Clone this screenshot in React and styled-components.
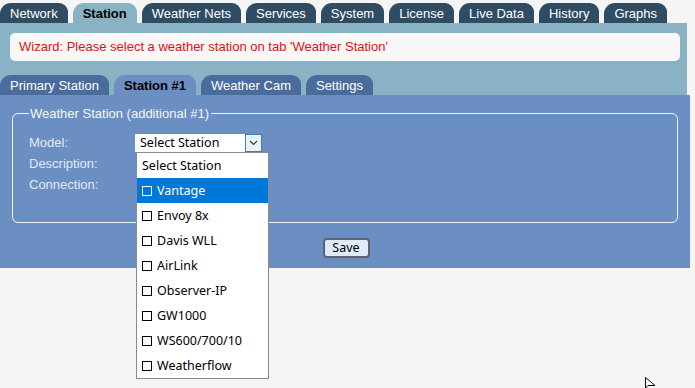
import React from "react";
import styled, { createGlobalStyle } from "styled-components";

const Global = createGlobalStyle`
  html, body { margin: 0; padding: 0; background: #f5f5f5; }
  body { font-family: "Liberation Sans", Arial, sans-serif; font-size: 13px; }
  #root { position: relative; min-height: 388px; overflow: hidden; }
`;

const Page = styled.div`
  width: 690px;
  display: flex;
  flex-direction: column;
`;

const TabRow = styled.div`
  display: flex;
  gap: 5px;
  padding-top: ${(p) => p.$top || 0}px;
`;

const Tab = styled.div`
  height: 20px;
  line-height: 21px;
  padding: 0 10px 0 10px;
  border-radius: 11px 9px 0 0;
  white-space: nowrap;
  font-size: 13px;
  background: ${(p) => (p.$active ? p.$activeBg : p.$bg)};
  color: ${(p) => (p.$active ? "#000" : "#fff")};
  font-weight: ${(p) => (p.$active ? "bold" : "normal")};
`;

const TopPanel = styled.div`
  background: #8ab2c5;
  padding: 10px 0 0 0;
  width: 687px;
  display: flex;
  flex-direction: column;
`;

const Message = styled.div`
  margin: 0 7px 0 10px;
  height: 28px;
  line-height: 28px;
  background: #f7f7f7;
  border-radius: 5px;
  color: #dd1414;
  padding-left: 9px;
  margin-bottom: 14px;
`;

const MainPanel = styled.div`
  background: #6b8fc2;
  height: 173px;
  padding-top: 11px;
  box-sizing: border-box;
  display: flex;
  flex-direction: column;
`;

const Fieldset = styled.fieldset`
  margin: 0 12px;
  border: 1px solid #f2f5fa;
  border-radius: 6px;
  padding: 11px 0 0 16px;
  height: 117px;
  box-sizing: border-box;
`;

const Legend = styled.legend`
  color: #f4f7fb;
  padding: 0 2px 0 1px;
  margin-left: 0;
  font-size: 13px;
  line-height: 15px;
`;

const FormGrid = styled.div`
  display: grid;
  grid-template-columns: 106px 1fr;
  grid-auto-rows: 21px;
  align-items: center;
`;

const Label = styled.div`
  color: #e4e9f2;
  font-size: 13px;
`;

const SelectWrap = styled.div`
  position: relative;
  width: 127px;
  height: 18px;
  background: #fff;
  display: flex;
  align-items: center;
  font-family: "Noto Sans", sans-serif;
  font-size: 12.5px;
  color: #000;
`;

const SelectText = styled.span`
  flex: 1;
  padding-left: 5px;
  line-height: 18px;
`;

const ArrowBox = styled.div`
  width: 15px;
  height: 16px;
  border: 1px solid #3d7fbd;
  background: #eaf3fb;
  display: flex;
  align-items: center;
  justify-content: center;
`;

const DropList = styled.div`
  position: absolute;
  left: 1px;
  top: 18px;
  width: 131px;
  background: #fff;
  border: 1px solid #8a8a8a;
  z-index: 5;
  display: flex;
  flex-direction: column;
`;

const Option = styled.div`
  height: 25px;
  line-height: 25px;
  padding-left: 5px;
  white-space: nowrap;
  font-family: "Noto Sans", sans-serif;
  font-size: 12.5px;
  background: ${(p) => (p.$sel ? "#0078d7" : "#fff")};
  color: ${(p) => (p.$sel ? "#fff" : "#000")};
`;

const Box = styled.span`
  display: inline-block;
  width: 8px;
  height: 8px;
  border: 1px solid ${(p) => (p.$sel ? "#fff" : "#000")};
  margin-right: 5px;
  vertical-align: -1px;
`;

const ButtonRow = styled.div`
  display: flex;
  justify-content: center;
  padding-top: 15px;
  padding-left: 2px;
`;

const SaveButton = styled.button`
  width: 47px;
  height: 20px;
  padding: 0;
  background: #dfeafa;
  border: 2px solid #5b6470;
  border-radius: 4px;
  font-family: "Noto Sans", sans-serif;
  font-size: 12.5px;
  color: #000;
  line-height: 14px;
`;

const Cursor = styled.svg`
  position: absolute;
  left: 645px;
  top: 377px;
`;

const topTabs = [
  "Network",
  "Station",
  "Weather Nets",
  "Services",
  "System",
  "License",
  "Live Data",
  "History",
  "Graphs",
];

const subTabs = ["Primary Station", "Station #1", "Weather Cam", "Settings"];

const options = [
  "Vantage",
  "Envoy 8x",
  "Davis WLL",
  "AirLink",
  "Observer-IP",
  "GW1000",
  "WS600/700/10",
  "Weatherflow",
];

export default function App() {
  return (
    <>
      <Global />
      <Page>
        <TabRow $top={3}>
          {topTabs.map((t) => (
            <Tab key={t} $bg="#2f4c63" $activeBg="#8ab2c5" $active={t === "Station"}>
              {t}
            </Tab>
          ))}
        </TabRow>
        <TopPanel>
          <Message>Wizard: Please select a weather station on tab 'Weather Station'</Message>
          <TabRow>
            {subTabs.map((t) => (
              <Tab key={t} $bg="#4a6c9c" $activeBg="#6b8fc2" $active={t === "Station #1"}>
                {t}
              </Tab>
            ))}
          </TabRow>
        </TopPanel>
        <MainPanel>
          <Fieldset>
            <Legend>Weather Station (additional #1)</Legend>
            <FormGrid>
              <Label>Model:</Label>
              <SelectWrap>
                <SelectText>Select Station</SelectText>
                <ArrowBox>
                  <svg width="9" height="6" viewBox="0 0 9 6">
                    <path d="M1 1 L4.5 4.5 L8 1" fill="none" stroke="#333" strokeWidth="1.1" />
                  </svg>
                </ArrowBox>
                <DropList>
                  <Option>Select Station</Option>
                  {options.map((o, i) => (
                    <Option key={o} $sel={i === 0}>
                      <Box $sel={i === 0} />
                      {o}
                    </Option>
                  ))}
                </DropList>
              </SelectWrap>
              <Label>Description:</Label>
              <div />
              <Label>Connection:</Label>
              <div />
            </FormGrid>
          </Fieldset>
          <ButtonRow>
            <SaveButton>Save</SaveButton>
          </ButtonRow>
        </MainPanel>
      </Page>
      <Cursor width="12" height="12" viewBox="0 0 12 12">
        <path d="M0.5 0.5 L0.5 11 L3 8.5 L10 8.5 Z" fill="#fff" stroke="#000" strokeWidth="1" />
      </Cursor>
    </>
  );
}
